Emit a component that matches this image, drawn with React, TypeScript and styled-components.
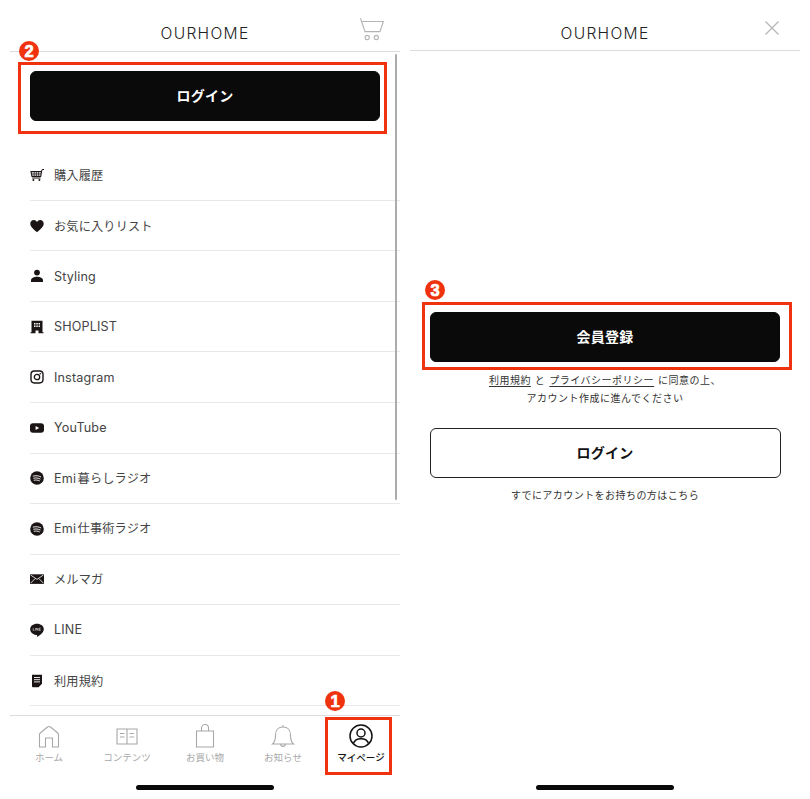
import React from "react";
import styled, { createGlobalStyle } from "styled-components";

const Global = createGlobalStyle`
  html, body { margin: 0; padding: 0; background: #fff; }
  body { font-family: "Liberation Sans", "Noto Sans CJK JP", sans-serif; overflow: hidden; }
`;

const Page = styled.div`
  width: 810px;
  height: 799px;
  display: flex;
  gap: 10px;
  padding: 0 10px;
  box-sizing: border-box;
  overflow: hidden;
  position: relative;
`;

const Phone = styled.section`
  width: 390px;
  height: 799px;
  display: flex;
  flex-direction: column;
  flex: none;
  position: relative;
  background: #fff;
`;

const Header = styled.header<{ $h: number; $pad: number }>`
  height: ${(p) => p.$h}px;
  padding-bottom: ${(p) => p.$pad}px;
  flex: none;
  box-sizing: border-box;
  border-bottom: 1px solid #dcdcdc;
  display: flex;
  align-items: flex-end;
  justify-content: center;
  position: relative;
`;

const Brand = styled.h1`
  margin: 0;
  font: 300 15.6px/20px "Inter", "Liberation Sans", sans-serif;
  letter-spacing: 1.3px;
  color: #222;
`;

const HeaderIcon = styled.span<{ $left: number; $top: number }>`
  position: absolute;
  left: ${(p) => p.$left}px;
  top: ${(p) => p.$top}px;
  display: block;
  line-height: 0;
`;

const Scroll = styled.div`
  flex: 1;
  min-height: 0;
  overflow: hidden;
  position: relative;
`;

const ScrollThumb = styled.div`
  position: absolute;
  right: 3px;
  top: 2px;
  width: 2.5px;
  height: 446px;
  background: #ababab;
  border-radius: 2px;
`;

const PrimaryButton = styled.button<{ $outline?: boolean }>`
  display: block;
  width: ${(p) => (p.$outline ? 351 : 350)}px;
  height: ${(p) => (p.$outline ? 50 : 49.5)}px;
  box-sizing: border-box;
  border-radius: 6px;
  border: 1px solid ${(p) => (p.$outline ? "#222" : "#0a0a0a")};
  background: ${(p) => (p.$outline ? "#fff" : "#0a0a0a")};
  color: ${(p) => (p.$outline ? "#111" : "#fff")};
  font: 700 14px/20px "Noto Sans CJK JP", sans-serif;
  letter-spacing: 0.3px;
  padding: 0 0 2px;
`;

const TopAction = styled.div`
  padding: 19px 20px 29.8px;
`;

const Menu = styled.ul`
  list-style: none;
  margin: 0;
  padding: 0 0 0 20px;
`;

const MenuRow = styled.li`
  height: 50.55px;
  box-sizing: border-box;
  border-bottom: 1px solid #e8e8e8;
  display: flex;
  align-items: center;
  gap: 10px;
  font: 400 12.2px/16px "Noto Sans CJK JP", sans-serif;
  letter-spacing: 0.15px;
  color: #444;
`;

const RowLatin = styled.span<{ $gap?: boolean }>`
  font-family: "Inter", "Noto Sans CJK JP", sans-serif;
  font-size: 12.6px;
  letter-spacing: 0.15px;
  margin-right: ${(p) => (p.$gap ? 1.5 : 0)}px;
`;

const RowIcon = styled.svg`
  width: 14px;
  height: 14px;
  flex: none;
  color: #1a1414;
`;

const Nav = styled.nav`
  flex: none;
  height: 58px;
  border-top: 1px solid #dcdcdc;
  display: grid;
  grid-template-columns: repeat(5, 78px);
`;

const NavItem = styled.div<{ $active?: boolean }>`
  display: flex;
  flex-direction: column;
  align-items: center;
  padding-top: 7px;
  gap: 1px;
  color: ${(p) => (p.$active ? "#111" : "#a8a8a8")};
  font: ${(p) => (p.$active ? 500 : 400)} 9.5px/14px "Noto Sans CJK JP", sans-serif;
`;

const NavIconBox = styled.svg`
  width: 26px;
  height: 26px;
  display: block;
`;

const HomeBarZone = styled.div`
  flex: none;
  height: 25px;
  display: flex;
  justify-content: center;
  padding-top: 11px;
  box-sizing: border-box;
`;

const HomeBar = styled.div`
  width: 138px;
  height: 5px;
  border-radius: 3px;
  background: #0a0a0a;
`;

const Body = styled.div`
  flex: 1;
  min-height: 0;
  display: flex;
  flex-direction: column;
  align-items: center;
  padding-top: 261px;
`;

const Terms = styled.p`
  margin: 9.5px 0 21px;
  font: 400 10px/18px "Noto Sans CJK JP", sans-serif;
  letter-spacing: 0.5px;
  word-spacing: 1.2px;
  text-align: center;
  color: #333;
  u { text-underline-offset: 2px; }
`;

const Hint = styled.p`
  margin: 8px 0 0;
  font: 400 10px/18px "Noto Sans CJK JP", sans-serif;
  letter-spacing: 0.45px;
  color: #333;
`;

const Highlight = styled.div<{ $x: number; $y: number; $w: number; $h: number }>`
  position: absolute;
  left: ${(p) => p.$x}px;
  top: ${(p) => p.$y}px;
  width: ${(p) => p.$w}px;
  height: ${(p) => p.$h}px;
  box-sizing: border-box;
  border: 3px solid #f0330f;
`;

const Badge = styled.span<{ $x: number; $y: number }>`
  position: absolute;
  left: ${(p) => p.$x}px;
  top: ${(p) => p.$y}px;
  width: 20px;
  height: 20px;
  border-radius: 50%;
  background: #f0330f;
  color: #fff;
  font: 900 16.5px/20px "Liberation Sans", sans-serif;
  -webkit-text-stroke: 0.7px #fff;
  text-align: center;
`;

const CartIcon = () => (
  <svg width="24" height="24" viewBox="0 0 24 24" fill="none" stroke="#b4b4b4" strokeWidth="1.1">
    <path d="M.5 .3 L5 13.6 H20 L23.300 3.500 H1.700" />
    <circle cx="7.200" cy="19.500" r="2.100" />
    <circle cx="16.300" cy="19.500" r="2.100" />
  </svg>
);

const CloseIcon = () => (
  <svg width="16" height="16" viewBox="0 0 16 16" fill="none" stroke="#b8b8b8" strokeWidth="1.4">
    <path d="M1.500 1.500 L14.500 14.500 M14.500 1.500 L1.500 14.500" />
  </svg>
);

const Ico: Record<string, React.ReactNode> = {
  cart: (
    <>
      <path d="M1 3.500h10.500l-.8 5H2z" fill="none" stroke="currentColor" strokeWidth="1.100" />
      <path d="M1.500 5.200h9.600M1.900 6.900h8.900M4.200 3.500v5M6.400 3.500v5M8.600 3.500v5" stroke="currentColor" strokeWidth=".7" />
      <path d="M11.400 3.600 L12 1.800 L14 1.400" fill="none" stroke="currentColor" strokeWidth="1" />
      <path d="M2.200 10h8.400" stroke="currentColor" strokeWidth="1" />
      <circle cx="3.400" cy="12" r="1" fill="currentColor" />
      <circle cx="9.400" cy="12" r="1" fill="currentColor" />
    </>
  ),
  heart: <path d="M7 13.200C3 10 .3 7.600.3 4.500.3 2.300 2 .9 3.800.9 5.200.9 6.300 1.700 7 2.900 7.700 1.700 8.800.9 10.200.9 12 .9 13.700 2.300 13.700 4.500c0 3.100-2.700 5.500-6.700 8.700z" fill="currentColor" />,
  person: (
    <>
      <circle cx="7" cy="3.600" r="2.900" fill="currentColor" />
      <path d="M1 13v-1.600C1 9 4 7.800 7 7.800s6 1.200 6 3.600V13z" fill="currentColor" />
    </>
  ),
  building: (
    <path
      fillRule="evenodd"
      d="M1.500.8h11v11.400h1v1h-5v-2.600h-3v2.600h-5v-1h1zM4 3v1.500h1.500V3zm2.300 0v1.500h1.500V3zm2.300 0v1.500H10V3zM4 5.600v1.500h1.500V5.600zm2.300 0v1.500h1.500V5.600zm2.300 0v1.500H10V5.600z"
      fill="currentColor"
    />
  ),
  insta: (
    <>
      <rect x="1" y="1" width="12" height="12" rx="3.400" fill="none" stroke="currentColor" strokeWidth="1.400" />
      <circle cx="7" cy="7" r="2.700" fill="none" stroke="currentColor" strokeWidth="1.300" />
      <circle cx="10.300" cy="3.700" r=".8" fill="currentColor" />
    </>
  ),
  youtube: <path fillRule="evenodd" d="M3 2.200h8a3 3 0 0 1 3 3v3.600a3 3 0 0 1-3 3H3a3 3 0 0 1-3-3V5.200a3 3 0 0 1 3-3zM5.600 4.900v4.200L9.200 7z" fill="currentColor" />,
  spotify: (
    <>
      <circle cx="7" cy="7" r="6.800" fill="currentColor" />
      <path d="M3.200 5.100c2.600-.7 5.300-.5 7.600.7M3.700 7.200c2.200-.5 4.500-.3 6.400.7M4.200 9.200c1.800-.4 3.600-.2 5.200.6" fill="none" stroke="#fff" strokeWidth=".9" strokeLinecap="round" />
    </>
  ),
  mail: (
    <>
      <rect x="0" y="2.300" width="14" height="9.600" fill="currentColor" />
      <path d="M.6 3 L7 7.400 L13.400 3 M.6 11.200 L5.200 6.500 M13.400 11.200 L8.800 6.500" fill="none" stroke="#fff" strokeWidth=".8" />
    </>
  ),
  line: (
    <>
      <path d="M7 .8c3.800 0 6.800 2.400 6.800 5.400 0 3-3.500 5.800-6.300 7.500-.6.3-.5-.6-.4-1.600C3.300 11.900.2 9.400.2 6.200.2 3.200 3.200.8 7 .8z" fill="currentColor" />
      <path d="M3.200 5v2.500h1.200M5.400 5v2.500M6.600 7.500V5l1.500 2.500V5M10.700 5H9.300v2.500h1.400M9.300 6.250h1.300" fill="none" stroke="#fff" strokeWidth=".5" />
    </>
  ),
  doc: (
    <>
      <path d="M2 .8h10v9L8.500 13.200H3a1 1 0 0 1-1-1z" fill="currentColor" />
      <path d="M4 3.500h6M4 5.700h6M4 7.900h6" stroke="#fff" strokeWidth=".9" />
    </>
  ),
};

type Item = { icon: string; label: React.ReactNode };

const items: Item[] = [
  { icon: "cart", label: "購入履歴" },
  { icon: "heart", label: "お気に入りリスト" },
  { icon: "person", label: <RowLatin>Styling</RowLatin> },
  { icon: "building", label: <RowLatin>SHOPLIST</RowLatin> },
  { icon: "insta", label: <RowLatin>Instagram</RowLatin> },
  { icon: "youtube", label: <RowLatin>YouTube</RowLatin> },
  { icon: "spotify", label: <><RowLatin $gap>Emi</RowLatin>暮らしラジオ</> },
  { icon: "spotify", label: <><RowLatin $gap>Emi</RowLatin>仕事術ラジオ</> },
  { icon: "mail", label: "メルマガ" },
  { icon: "line", label: <RowLatin>LINE</RowLatin> },
  { icon: "doc", label: "利用規約" },
];

const navItems: { label: string; active?: boolean; icon: React.ReactNode }[] = [
  { label: "ホーム", icon: <path d="M3.500 24V11.500Q3.500 10.500 4.500 9.700L11.500 4Q13 2.900 14.500 4L21.500 9.700Q22.500 10.500 22.500 11.500V24h-6v-9h-7v9z" strokeLinejoin="round" /> },
  {
    label: "コンテンツ",
    icon: <path d="M3 6h20v15H3zM13 6v15M6 10.500h4.500M6 14h4.500M15.500 10.500H20M15.500 14H20" />,
  },
  { label: "お買い物", icon: <path d="M4.500 8h17v16h-17zM9.500 8V5a3.500 3.500 0 0 1 7 0v3" /> },
  {
    label: "お知らせ",
    icon: <path d="M2.500 21c2.500-2 3-4 3-9 0-5 3-8 7.500-8s7.500 3 7.500 8c0 5 .5 7 3 9zM10.500 21.500a2.600 2.600 0 0 0 5 0M13 4V2" />,
  },
  {
    label: "マイページ",
    active: true,
    icon: (
      <>
        <circle cx="13" cy="13" r="11" />
        <circle cx="13" cy="10" r="4" />
        <path d="M5.500 20.500c1-3.500 4-4.800 7.500-4.800s6.500 1.300 7.500 4.800" />
      </>
    ),
  },
];

export default function App() {
  return (
    <Page>
      <Global />
      <Phone>
        <Header $h={52} $pad={7}>
          <Brand>OURHOME</Brand>
          <HeaderIcon $left={350} $top={18}>
            <CartIcon />
          </HeaderIcon>
        </Header>
        <Scroll>
          <TopAction>
            <PrimaryButton>ログイン</PrimaryButton>
          </TopAction>
          <Menu>
            {items.map((it, i) => (
              <MenuRow key={i}>
                <RowIcon viewBox="0 0 14 14">{Ico[it.icon]}</RowIcon>
                <span>{it.label}</span>
              </MenuRow>
            ))}
          </Menu>
          <ScrollThumb />
        </Scroll>
        <Nav>
          {navItems.map((n) => (
            <NavItem key={n.label} $active={n.active}>
              <NavIconBox viewBox="0 0 26 26" fill="none" stroke="currentColor" strokeWidth={n.active ? 1.5 : 1.1}>
                {n.icon}
              </NavIconBox>
              {n.label}
            </NavItem>
          ))}
        </Nav>
        <HomeBarZone>
          <HomeBar />
        </HomeBarZone>
        <Highlight $x={8} $y={62} $w={369} $h={72} />
        <Badge $x={9} $y={41}>2</Badge>
        <Highlight $x={315} $y={717} $w={67} $h={58} />
        <Badge $x={315} $y={691}>1</Badge>
      </Phone>
      <Phone>
        <Header $h={51} $pad={6}>
          <Brand>OURHOME</Brand>
          <HeaderIcon $left={354} $top={20}>
            <CloseIcon />
          </HeaderIcon>
        </Header>
        <Body>
          <PrimaryButton>会員登録</PrimaryButton>
          <Terms>
            <u>利用規約</u> と <u>プライバシーポリシー</u> に同意の上、
            <br />
            アカウント作成に進んでください
          </Terms>
          <PrimaryButton $outline>ログイン</PrimaryButton>
          <Hint>すでにアカウントをお持ちの方はこちら</Hint>
        </Body>
        <HomeBarZone>
          <HomeBar />
        </HomeBarZone>
        <Highlight $x={12} $y={302} $w={370} $h={68} />
        <Badge $x={15} $y={280}>3</Badge>
      </Phone>
    </Page>
  );
}
